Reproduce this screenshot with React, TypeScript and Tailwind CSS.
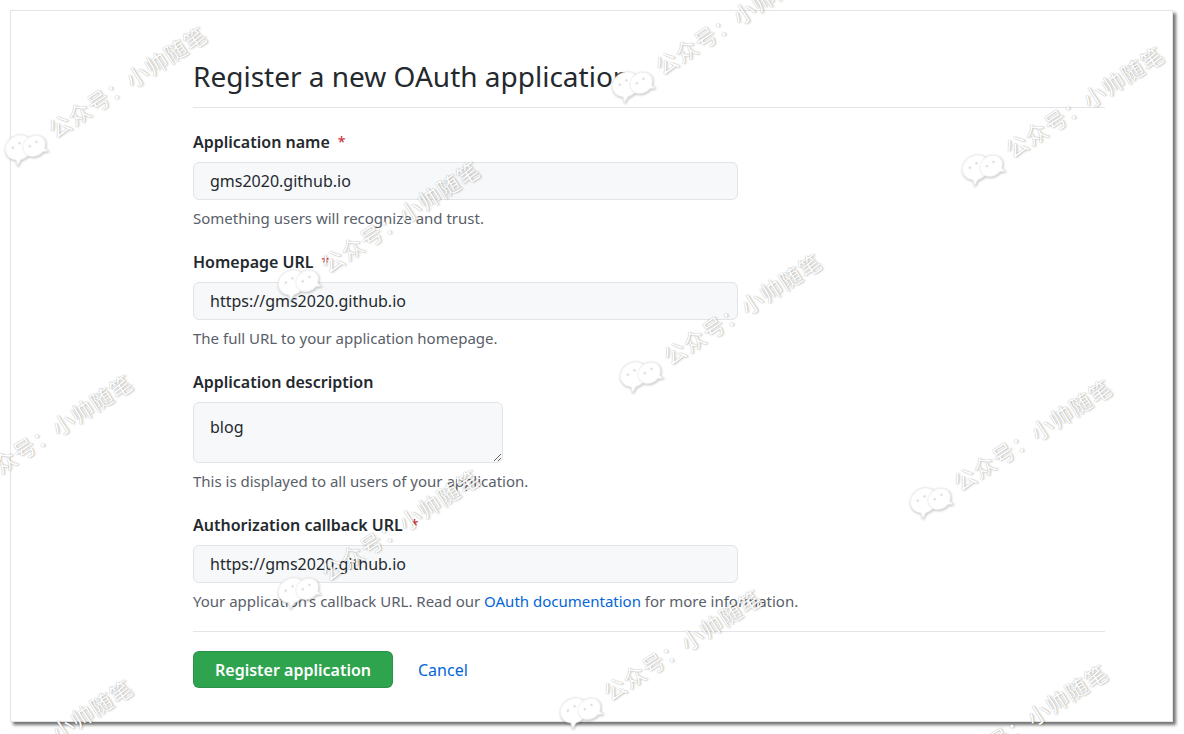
import React from "react";

const marks = [
  { x: 105, y: 95 },
  { x: 712, y: 32 },
  { x: 1062, y: 115 },
  { x: 378, y: 230 },
  { x: 720, y: 322 },
  { x: 31, y: 443 },
  { x: 378, y: 538 },
  { x: 660, y: 658 },
  { x: 1010, y: 448 },
  { x: 1006, y: 733 },
  { x: 31, y: 748 },
];

function WeChat() {
  return (
    <svg width="46" height="34" viewBox="0 0 46 34" className="[filter:drop-shadow(0.5px_1px_1px_rgba(0,0,0,0.28))]">
      <path d="M17 2C9 2 3 7.5 3 14c0 3.6 1.9 6.8 4.9 9L6 29l6.2-3.3c1.5.4 3.1.6 4.8.6 8 0 14-5.5 14-12.3S25 2 17 2z" fill="#fff" stroke="#e6e6e6" strokeWidth="0.8" />
      <path d="M31 11c-6.6 0-12 4.5-12 10.2S24.4 31.4 31 31.4c1.4 0 2.7-.2 4-.6l5 2.6-1.4-4.6c2.4-1.9 4.4-4.5 4.4-7.6C43 15.5 37.6 11 31 11z" fill="#fff" stroke="#e6e6e6" strokeWidth="0.8" />
      <circle cx="12" cy="11" r="1.3" fill="#dcdcdc" />
      <circle cx="20" cy="11" r="1.3" fill="#dcdcdc" />
      <circle cx="27" cy="19" r="1.2" fill="#dcdcdc" />
      <circle cx="35" cy="19" r="1.2" fill="#dcdcdc" />
    </svg>
  );
}

function Mark({ x, y }: { x: number; y: number }) {
  return (
    <div
      className="absolute pointer-events-none flex items-center gap-[6px] -translate-x-1/2 -translate-y-1/2 -rotate-[33deg] whitespace-nowrap"
      style={{ left: x, top: y }}
    >
      <WeChat />
      <span className="text-[22px] leading-none tracking-[1px] text-white font-['Noto_Sans_CJK_SC',sans-serif] [text-shadow:0_0_1px_rgba(0,0,0,0.35),1px_1px_2px_rgba(0,0,0,0.2)]">
        公众号：小帅随笔
      </span>
    </div>
  );
}

function Label({ children, required }: { children: React.ReactNode; required?: boolean }) {
  return (
    <div className="text-[16px] leading-6 font-semibold text-[#24292e] mb-2">
      {children}
      {required && <span className="text-[#cb2431] font-normal text-[14px] ml-[8px] align-top">*</span>}
    </div>
  );
}

function Input({ value }: { value: string }) {
  return (
    <div className="w-[545px] h-[38px] flex items-center px-4 bg-[#f6f8fa] border border-[#e1e4e8] rounded-[6px] text-[16px] text-[#24292e]">
      {value}
    </div>
  );
}

function Help({ children }: { children: React.ReactNode }) {
  return <div className="mt-2 text-[15px] leading-5 text-[#586069]">{children}</div>;
}

export default function App() {
  return (
    <div className="relative w-[1184px] h-[734px] bg-white overflow-hidden pt-[10px] pl-[10px] font-['Noto_Sans',sans-serif]">
      <div className="w-[1163px] h-[712px] bg-white border border-[#e4e4e4] [box-shadow:3px_3px_3px_rgba(0,0,0,0.55)] pl-[182px] pt-[48px]">
        <div className="w-[912px]">
          <h1 className="text-[28px] leading-[35px] font-normal text-[#24292e] pb-[13px] border-b border-[#e1e4e8]">
            Register a new OAuth application
          </h1>
          <div className="mt-[22px]">
            <Label required>Application name</Label>
            <Input value="gms2020.github.io" />
            <Help>Something users will recognize and trust.</Help>
          </div>
          <div className="mt-[22px]">
            <Label required>Homepage URL</Label>
            <Input value="https://gms2020.github.io" />
            <Help>The full URL to your application homepage.</Help>
          </div>
          <div className="mt-[22px]">
            <Label>Application description</Label>
            <textarea
              readOnly
              defaultValue="blog"
              className="block w-[310px] h-[61px] px-4 py-[12px] bg-[#f6f8fa] border border-[#e1e4e8] rounded-[6px] text-[16px] leading-6 text-[#24292e] outline-none resize-y"
            />
            <Help>This is displayed to all users of your application.</Help>
          </div>
          <div className="mt-[22px]">
            <Label required>Authorization callback URL</Label>
            <Input value="https://gms2020.github.io" />
            <Help>
              Your application’s callback URL. Read our{" "}
              <span className="text-[#0366d6]">OAuth documentation</span> for more information.
            </Help>
          </div>
          <div className="mt-[20px] border-t border-[#e1e4e8] pt-[19px] flex items-center">
            <button className="h-[37px] px-[21px] bg-[#2ea44f] border border-[rgba(27,31,35,0.15)] rounded-[6px] text-white text-[16px] font-semibold">
              Register application
            </button>
            <span className="ml-[25px] text-[16px] text-[#0366d6]">Cancel</span>
          </div>
        </div>
      </div>
      {marks.map((m, i) => (
        <Mark key={i} x={m.x} y={m.y} />
      ))}
    </div>
  );
}
